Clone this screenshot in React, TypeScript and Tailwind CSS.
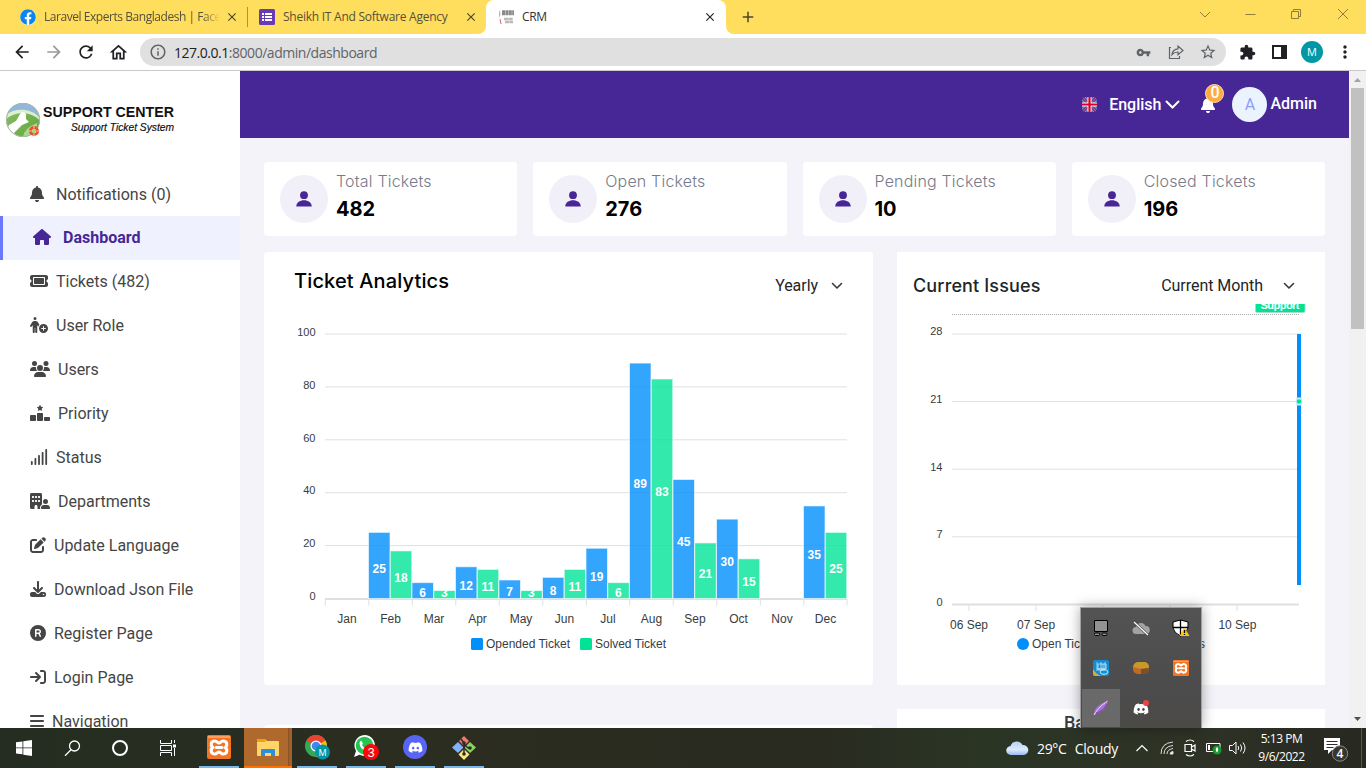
import React from "react";
import {
  FaArrowRightToBracket,
  FaBars,
  FaBell,
  FaBuildingUser,
  FaDownload,
  FaHouse,
  FaPenToSquare,
  FaPersonCirclePlus,
  FaRankingStar,
  FaRegistered,
  FaSignal,
  FaTicket,
  FaUsers,
  FaDiscord,
} from "react-icons/fa6";
import { FaFacebook } from "react-icons/fa";
import {
  MdAdd,
  MdArrowBack,
  MdArrowForward,
  MdClose,
  MdExtension,
  MdInfoOutline,
  MdMoreVert,
  MdOutlineHome,
  MdRefresh,
  MdStarBorder,
  MdVpnKey,
} from "react-icons/md";

const chromeFont = "font-['Open_Sans',sans-serif]";

/* ---------- Browser window ---------- */

function TabStrip() {
  return (
    <div className={`flex h-[34px] shrink-0 bg-white text-[12px] ${chromeFont}`}>
      <div className="flex w-[486px] items-center rounded-br-lg bg-[#ffdd5d] text-[#56513a]">
        <div className="flex w-[247px] items-center pl-5">
          <span className="flex size-4 items-center justify-center rounded-full bg-white">
            <FaFacebook className="size-4 text-[#0b86ee]" />
          </span>
          <span className="ml-2 w-[176px] overflow-hidden whitespace-nowrap tracking-[-0.45px] [mask-image:linear-gradient(90deg,#000_90%,transparent)]">
            Laravel Experts Bangladesh | Facebook
          </span>
          <MdClose className="ml-[5px] size-[14px] text-[#4b4632]" />
        </div>
        <div className="h-5 w-px bg-[#a79348]" />
        <div className="flex w-[238px] items-center pl-[11px]">
          <svg width="16" height="16" viewBox="0 0 16 16">
            <rect width="16" height="16" rx="1.5" fill="#673ab7" />
            <path d="M3 4h2v2H3zM6 4h7v2H6zM3 7h2v2H3zM6 7h7v2H6zM3 10h2v2H3zM6 10h7v2H6z" fill="#fff" />
          </svg>
          <span className="ml-2 w-[182px] whitespace-nowrap tracking-[-0.25px]">Sheikh IT And Software Agency</span>
          <MdClose className="-ml-[1px] size-[14px] text-[#4b4632]" />
        </div>
      </div>
      <div className="w-60 bg-[#ffdd5d]">
        <div className="flex h-full items-center rounded-t-lg bg-white pl-3 text-[#333]">
          <svg width="16" height="16" viewBox="0 0 16 16">
            <path d="M1 1q3 3 0 8z" fill="#9ccf9c" />
            <path d="M2 10l1 5" stroke="#d96b6b" />
            <path d="M4 2.500h12M4 5h12" stroke="#8a8a8a" strokeWidth="2.500" strokeDasharray="3 .4" />
            <path d="M6 10h9M7 13h8" stroke="#bbb" strokeWidth="2.600" strokeDasharray="4 .3" />
          </svg>
          <span className="ml-2 w-[180px] tracking-[-0.4px]">CRM</span>
          <MdClose className="ml-[1px] size-[14px] text-[#222]" />
        </div>
      </div>
      <div className="flex flex-1 items-center rounded-bl-lg bg-[#ffdd5d] pl-[13px]">
        <MdAdd className="size-[18px] text-[#4b4632]" />
        <svg className="mb-[6px] ml-auto mr-[15px]" width="152" height="12" viewBox="0 0 152 12" fill="none" stroke="#8f7d39">
          <path d="M1 4l5 5 5-5M46.500 6.500h10M92.500 3.500h7v7h-7zM94.500 3.500v-2h7v7h-2M139 1l10 10M149 1l-10 10" />
        </svg>
      </div>
    </div>
  );
}

function Toolbar() {
  return (
    <div className={`flex h-[37px] shrink-0 items-center border-b border-[#c9c9c9] bg-white text-[#202124] ${chromeFont}`}>
      <div className="flex items-center gap-3 pl-3">
        <MdArrowBack className="size-5" />
        <MdArrowForward className="size-5 text-[#999]" />
        <MdRefresh className="size-5" />
        <MdOutlineHome className="size-[21px]" />
      </div>
      <div className="ml-[11px] flex h-7 w-[1086px] items-center rounded-full bg-[#e0e0e0] pl-[9px] text-[#5f6368]">
        <MdInfoOutline className="size-[18px]" />
        <span className="ml-[7px] text-[14px] tracking-[-0.47px]">
          <span className="text-[#202124]">127.0.0.1</span>:8000/admin/dashboard
        </span>
        <MdVpnKey className="ml-auto size-[15px]" />
        <svg className="ml-4" width="18" height="18" viewBox="0 0 18 18" fill="none" stroke="#5f6368" strokeWidth="1.200">
          <path d="M4 4.500H2.500v11h10V13" />
          <path d="M5 11.500C5.500 8 7.500 6 11 5.800V3l5 4.500-5 4.300V9C8.500 9 6.500 9.800 5 11.500z" />
        </svg>
        <MdStarBorder className="ml-[14px] mr-[9px] size-[18px]" />
      </div>
      <MdExtension className="ml-[13px] size-[17px]" />
      <svg className="ml-4" width="15" height="14" viewBox="0 0 15 14">
        <path d="M0 0h15v14H0zM2 2v10h7V2z" fill="#202124" fillRule="evenodd" />
      </svg>
      <div className="ml-[14px] flex size-[22px] items-center justify-center rounded-full bg-[#0097a7] text-[11px] text-white">M</div>
      <MdMoreVert className="ml-3 size-5" />
    </div>
  );
}

/* ---------- Sidebar ---------- */

const navItems = [
  { label: "Notifications (0)", Icon: FaBell, icon: "w-[14px] mr-3" },
  { label: "Dashboard", Icon: FaHouse, icon: "w-[18px] mr-3", active: true },
  { label: "Tickets (482)", Icon: FaTicket, icon: "w-[18px] mr-2" },
  { label: "User Role", Icon: FaPersonCirclePlus, icon: "w-[18px] mr-2" },
  { label: "Users", Icon: FaUsers, icon: "w-5 mr-2" },
  { label: "Priority", Icon: FaRankingStar, icon: "w-5 mr-2" },
  { label: "Status", Icon: FaSignal, icon: "w-[18px] mr-2" },
  { label: "Departments", Icon: FaBuildingUser, icon: "w-5 mr-2" },
  { label: "Update Language", Icon: FaPenToSquare, icon: "w-4 mr-2" },
  { label: "Download Json File", Icon: FaDownload, icon: "w-4 mr-2" },
  { label: "Register Page", Icon: FaRegistered, icon: "w-4 mr-2" },
  { label: "Login Page", Icon: FaArrowRightToBracket, icon: "w-4 mr-2" },
  { label: "Navigation", Icon: FaBars, icon: "w-[14px] mr-2" },
];

function Logo() {
  return (
    <svg width="180" height="42" viewBox="0 0 180 42" className="shrink-0">
      <defs>
        <clipPath id="globe">
          <circle cx="23" cy="21" r="17" />
        </clipPath>
        <linearGradient id="field" x1="0" y1="0" x2="1" y2="1">
          <stop offset="0" stopColor="#8fc76a" />
          <stop offset="1" stopColor="#5f9f3a" />
        </linearGradient>
      </defs>
      <g clipPath="url(#globe)">
        <rect width="42" height="42" fill="url(#field)" />
        <path d="M4 2h38v20C36 10 14 6 4 20z" fill="#93b6de" />
        <path d="M4 18C12 8 32 8 41 20l-1 2C32 12 14 12 5 21z" fill="#dcefd0" />
        <path d="M20 15q3-4 6 0v5l3 3-7 3-8 8 5 6h-9l-4-8 3-6 7-4z" fill="#fff" />
        <path d="M23 38q1-9 14-14v14z" fill="#a9d888" />
      </g>
      <circle cx="23" cy="21" r="16.500" fill="none" stroke="#a9b8ad" />
      <circle cx="34" cy="32" r="3.700" fill="none" stroke="#e9532b" strokeWidth="2.800" />
      <path d="M34 26.500v3M34 34.500v3M28.500 32h3M36.500 32h3" stroke="#ffc9a8" />
      <g fontFamily="Liberation Sans, sans-serif">
        <text x="43" y="18" fontSize="15.500" fontWeight="700" fill="#111" textLength="131" lengthAdjust="spacingAndGlyphs">
          SUPPORT CENTER
        </text>
        <text x="71" y="32" fontSize="11.500" fontStyle="italic" fill="#111" stroke="#111" strokeWidth=".2" textLength="103" lengthAdjust="spacingAndGlyphs">
          Support Ticket System
        </text>
      </g>
    </svg>
  );
}

function Sidebar() {
  return (
    <aside className="flex w-60 shrink-0 flex-col overflow-hidden bg-white pt-7">
      <Logo />
      <nav className="mt-[31px] text-[16px] text-[#454545]">
        {navItems.map(({ label, Icon, icon, active }) => (
          <div
            key={label}
            className={
              active
                ? "flex h-11 items-center border-l-[3px] border-[#6b78fb] bg-[#eff1ff] pl-[30px] font-bold text-[#472795]"
                : "flex h-11 items-center pl-[30px] first:pt-px"
            }
          >
            <Icon className={`mb-[2px] h-4 shrink-0 ${icon}`} preserveAspectRatio="none" />
            <span className="whitespace-nowrap">{label}</span>
          </div>
        ))}
      </nav>
    </aside>
  );
}

/* ---------- Page header ---------- */

function Header() {
  return (
    <header className="flex h-[67px] shrink-0 items-center justify-end bg-[#472795] pr-8 text-[16px] font-medium text-white">
      <svg width="15" height="15" viewBox="0 0 15 15">
        <path d="M0 3l12 12M3 0l12 12M15 3L3 15M12 0L0 12" stroke="#6f8fd9" strokeWidth="1.400" />
        <path d="M1 1l13 13M14 1L1 14" stroke="#e14c5c" strokeWidth="1.200" />
        <path d="M7.500 0v15M0 7.500h15" stroke="#fff" strokeWidth="4" />
        <path d="M7.500 0v15M0 7.500h15" stroke="#d80027" strokeWidth="2.200" />
      </svg>
      <span className="ml-3 ">English</span>
      <svg className="ml-1" width="15" height="10" viewBox="0 0 15 10" fill="none" stroke="#fff" strokeWidth="2" strokeLinecap="round">
        <path d="M1.500 1.500l6 6 6-6" />
      </svg>
      <div className="relative ml-[21px]">
        <FaBell className="h-4 w-[14px]" preserveAspectRatio="none" />
        <span className="absolute -top-[13px] left-1 flex size-[19px] items-center justify-center rounded-full border border-[#ffe0b0] bg-[#ffab40] text-[16px] leading-none">
          0
        </span>
      </div>
      <div className="ml-[17px] flex size-[35px] items-center justify-center rounded-full bg-[#ebf3ff] font-normal text-[#8c9eff]">A</div>
      <span className="mb-[2px] ml-[3px]">Admin</span>
    </header>
  );
}

/* ---------- Dashboard ---------- */

const stats = [
  ["Total Tickets", "482"],
  ["Open Tickets", "276"],
  ["Pending Tickets", "10"],
  ["Closed Tickets", "196"],
];

const months: [string, number, number][] = [
  ["Jan", 0, 0],
  ["Feb", 25, 18],
  ["Mar", 6, 3],
  ["Apr", 12, 11],
  ["May", 7, 3],
  ["Jun", 8, 11],
  ["Jul", 19, 6],
  ["Aug", 89, 83],
  ["Sep", 45, 21],
  ["Oct", 30, 15],
  ["Nov", 0, 0],
  ["Dec", 35, 25],
];

function Bar({ x, value, fill }: { x: number; value: number; fill: string }) {
  if (!value) return null;
  const h = value * 2.645;
  const labelY = Math.min(598.5 - h / 2 + 7.2, 597);
  const clipped = value < 4;
  return (
    <g>
      <rect x={x} y={598.5 - h} width="21.500" height={h} fill={fill} fillOpacity=".8" stroke="#fff" strokeOpacity=".6" />
      <svg x={x - 1} y={clipped ? 590.5 : 300} width="22" height={clipped ? 8 : 300} viewBox={`${x} ${clipped ? 590.5 : 300} 22 ${clipped ? 8 : 300}`}>
        <text x={x + 11.7} y={labelY} textAnchor="middle" fill="#fff" fontSize="12" fontWeight="700">
          {value}
        </text>
      </svg>
    </g>
  );
}

function TicketChart() {
  return (
    <svg width="609" height="379" viewBox="264 306 609 379" fontFamily="Liberation Sans, sans-serif" fill="#373d3f" className="block">
      {[100, 80, 60, 40, 20, 0].map((v, i) => (
        <g key={v}>
          <text x="315.500" y={336 + i * 52.8} fontSize="11" textAnchor="end">
            {v}
          </text>
          {v > 0 && <path d={`M325 ${334 + i * 52.9}H847`} stroke="#e0e0e0" />}
        </g>
      ))}
      <path d="M325 599H847" stroke="#e0e0e0" strokeWidth="2" />
      {months.map(([m, a, b], i) => {
        const x = 325 + i * 43.5;
        return (
          <g key={m}>
            <Bar x={x} value={a} fill="#008ffb" />
            <Bar x={x + 21.75} value={b} fill="#00e396" />
            <path d={`M${x + 0.3} 599v6.500`} stroke="#e0e0e0" />
            <text x={x + 22} y="623" fontSize="12" textAnchor="middle">
              {m}
            </text>
          </g>
        );
      })}
      <path d="M847 599v6.500" stroke="#e0e0e0" />
      <rect x="471" y="638" width="12" height="12" rx="1.500" fill="#008ffb" />
      <text x="486" y="648" fontSize="12" textLength="84">Opended Ticket</text>
      <rect x="580" y="638" width="12" height="12" rx="1.500" fill="#00e396" />
      <text x="595" y="648" fontSize="12" textLength="71">Solved Ticket</text>
    </svg>
  );
}

function IssuesChart() {
  return (
    <svg width="428" height="381" viewBox="897 304 428 381" fontFamily="Liberation Sans, sans-serif" fill="#373d3f" className="block overflow-hidden">
      <path d="M952 314.500H1299" stroke="#aaa" strokeDasharray="1 1" />
      <rect x="1255.500" y="293" width="49.500" height="19.500" rx="1.500" fill="#00e396" stroke="#b0d8c8" strokeWidth=".8" />
      <text x="1280" y="309" fontSize="11" fontWeight="700" fill="#fff" textAnchor="middle" textLength="39">
        Support
      </text>
      {[28, 21, 14, 7, 0].map((v, i) => (
        <g key={v}>
          <text x="942.500" y={335 + i * 67.8} fontSize="11" textAnchor="end">
            {v}
          </text>
          <path d={`M952 ${334 + i * 67.6}H1299`} stroke="#e0e0e0" strokeWidth={v ? 1 : 2} />
        </g>
      ))}
      {["06 Sep", "07 Sep", "08 Sep", "09 Sep", "10 Sep"].map((d, i) => (
        <g key={d}>
          <path d={`M${969 + i * 67} 605v6`} stroke="#e0e0e0" />
          <text x={969 + i * 67.1} y="629" fontSize="12" textAnchor="middle">
            {d}
          </text>
        </g>
      ))}
      <rect x="1297" y="334" width="4" height="251" fill="#008ffb" />
      <rect x="1296" y="397.500" width="6" height="8" fill="#c9ecff" />
      <circle cx="1299" cy="401.500" r="2.300" fill="#00e396" />
      <circle cx="1023" cy="644" r="6" fill="#008ffb" />
      <text x="1032" y="648" fontSize="12">Open Tickets</text>
      <circle cx="1119" cy="644" r="6" fill="#00e396" />
      <text x="1205" y="648" fontSize="12" textAnchor="end">Closed Tickets</text>
    </svg>
  );
}

function Chevron() {
  return (
    <svg width="12" height="8" viewBox="0 0 12 8" fill="none" stroke="#343a40" strokeWidth="1.600" strokeLinecap="round" strokeLinejoin="round">
      <path d="M1.500 1.500L6 6l4.500-4.500" />
    </svg>
  );
}

function Dashboard() {
  return (
    <main className="flex min-h-0 flex-1 flex-col overflow-hidden bg-[#f5f3fa] p-6 pb-0">
      <div className="grid shrink-0 grid-cols-4 gap-4">
        {stats.map(([label, value]) => (
          <div key={label} className="flex h-[74px] rounded bg-white pl-4 pt-[13px] font-['Inter',sans-serif]">
            <div className="flex size-12 items-center justify-center rounded-full bg-[#f1eff8]">
              <svg width="16" height="16" viewBox="0 0 16 16" fill="#472795">
                <circle cx="8" cy="4.200" r="3.900" />
                <path d="M.3 15.500C.3 11.500 4 9.300 8 9.300s7.700 2.200 7.700 6.200z" />
              </svg>
            </div>
            <div className="-mt-[6px] ml-2">
              <div className="text-[16px] font-light leading-6 tracking-[0.18px] text-[#767b8a]">{label}</div>
              <div className="mt-px text-[20px] font-bold leading-[30px] text-black">{value}</div>
            </div>
          </div>
        ))}
      </div>
      <div className="mt-4 flex shrink-0 gap-6">
        <section className="h-[433px] w-[609px] rounded bg-white">
          <div className="flex h-[54px] justify-between pl-[30px] pr-[30px]">
            <h2 className="pt-[14px] font-['Inter',sans-serif] text-[20px] font-medium leading-[30px] tracking-[0.14px] text-black">Ticket Analytics</h2>
            <div className="flex items-center gap-[13px] pt-[14px] text-[16px] tracking-[-0.05px] text-[#212529]">
              Yearly
              <Chevron />
            </div>
          </div>
          <TicketChart />
        </section>
        <section className="h-[433px] w-[428px] bg-white">
          <div className="flex h-[52px] items-center justify-between pl-4 pr-[30px] pt-4">
            <h2 className="mb-[2px] font-['Inter',sans-serif] text-[18px] font-medium tracking-[0.14px] text-[#212529]">Current Issues</h2>
            <div className="flex items-center gap-5 text-[16px] tracking-[-0.05px] text-[#212529]">
              Current Month
              <Chevron />
            </div>
          </div>
          <IssuesChart />
        </section>
      </div>
      <div className="mt-6 flex shrink-0 gap-6">
        <section className="mt-4 h-20 w-[609px] rounded bg-white" />
        <section className="h-20 w-[428px] bg-white pl-[167px] text-[18px] font-medium leading-[27px] text-[#373d3f]">
          <h2>Bar Chart</h2>
        </section>
      </div>
    </main>
  );
}

function Scrollbar() {
  return (
    <div className="flex w-[17px] shrink-0 flex-col items-center bg-[#f1f1f1]">
      <svg width="17" height="17" viewBox="0 0 17 17">
        <path d="M5 11l3.500-4 3.500 4z" fill="#a3a3a3" />
      </svg>
      <div className="h-[241px] w-[13px] bg-[#c1c1c1]" />
      <svg className="mt-auto" width="17" height="17" viewBox="0 0 17 17">
        <path d="M5 6l3.500 4L12 6z" fill="#505050" />
      </svg>
    </div>
  );
}

/* ---------- Taskbar ---------- */

function Xampp({ size }: { size: number }) {
  return (
    <svg width={size} height={size} viewBox="0 0 24 24">
      <rect width="24" height="24" rx="2" fill="#f37423" />
      <path d="M1 2h22" stroke="#ffae78" strokeWidth="1.500" />
      <path
        d="M8 6C10 6 10.500 8 12 8S14 6 16 6c4.500 0 4.500 4.500 2.500 6.500C20.500 14.500 20.500 19 16 19c-2 0-2.500-2-4-2s-2 2-4 2c-4.500 0-4.500-4.500-2.500-6.500C3.500 10.500 3.500 6 8 6z"
        fill="none"
        stroke="#fff"
        strokeWidth="3.200"
      />
      <path d="M9 12.500h6" stroke="#fff" strokeWidth="3" strokeLinecap="round" />
    </svg>
  );
}

function Tray() {
  const cell = "flex size-10 items-center justify-center";
  return (
    <div className="absolute left-[1080px] top-[607px] grid h-[121px] w-[122px] grid-cols-3 grid-rows-[40px_40px_40px] border border-b-0 border-[#a0a0a0] bg-[linear-gradient(#535353,#4b4b4b_75%,#4b4a46)] shadow-[0_0_12px_rgba(0,0,0,0.35)]">
      <div className={cell}>
        <svg width="16" height="16" viewBox="0 0 16 16" fill="#929292" stroke="#000">
          <path d="M1.500.5h13v11h-13z" />
          <rect x="1.500" y="13" width="5" height="2.500" rx="1" />
          <rect x="9" y="13" width="5" height="2.500" rx="1" />
        </svg>
      </div>
      <div className={cell}>
        <svg width="18" height="16" viewBox="0 0 18 16">
          <path d="M4 14a3.500 3.500 0 010-7 5 5 0 019.500-1 4 4 0 01.5 8z" fill="#a3a3a3" />
          <path d="M2 2l14 13" stroke="#505050" strokeWidth="2.400" />
          <path d="M2 2l14 13" stroke="#fff" strokeWidth="1.200" />
        </svg>
      </div>
      <div className={cell}>
        <svg width="18" height="18" viewBox="0 0 18 18">
          <path d="M8.500 1l7.500 2v6q-1 5-7.500 8Q2 14 1 9V3z" fill="#fff" stroke="#000" />
          <path d="M8.500 1v16M1 8.500h15" stroke="#000" strokeWidth="1.300" />
          <path d="M12.500 8.500L17.500 17h-10z" fill="#ffc20e" />
          <path d="M12.500 11v3M12.500 15v1" stroke="#000" strokeWidth="1.300" />
        </svg>
      </div>
      <div className={cell}>
        <svg width="16" height="16" viewBox="0 0 16 16">
          <rect width="16" height="16" rx="2" fill="#138cd0" />
          <path d="M0 9q3 5 8 7H2q-2 0-2-2z" fill="#d3ad36" />
          <path d="M4 2v7h8V2M5 4h8v5H5zM8 2v7M10 4v5M3 10h9" fill="none" stroke="#c5ebff" strokeWidth=".8" />
          <ellipse cx="11" cy="12" rx="4" ry="2.300" fill="none" stroke="#c5ebff" />
        </svg>
      </div>
      <div className={cell}>
        <svg width="16" height="12" viewBox="0 0 16 12">
          <rect width="16" height="12" rx="5" fill="#c5672a" />
          <path d="M0 5Q1 1 5 0h7q4 1 4 6Q8 8 0 5z" fill="#c59a28" />
          <path d="M8 7l8-1q0 5-4 6H8z" fill="#7c5129" />
        </svg>
      </div>
      <div className={cell}>
        <Xampp size={16} />
      </div>
      <div className="ml-px flex size-[38px] items-center justify-center self-center bg-[#696969]">
        <svg width="16" height="16" viewBox="0 0 16 16">
          <path d="M1 15C1 8 6 4 14.500 1 14 8 10 12 1 15z" fill="#a973d5" />
          <path d="M1 15C5 8 9 5 14.500 1" stroke="#ead5ff" fill="none" />
          <path d="M3 13.500C9 11 12 8 14 4" stroke="#7438a2" fill="none" />
        </svg>
      </div>
      <div className={cell}>
        <svg width="18" height="18" viewBox="0 0 18 18">
          <FaDiscord x="1" y="2" width="15" height="15" color="#fff" />
          <circle cx="14" cy="4" r="3" fill="#f23f42" />
        </svg>
      </div>
    </div>
  );
}

function AppSlot({ children }: { children: React.ReactNode }) {
  return (
    <div className="flex h-10 w-10 flex-col items-center border-b-2 border-[#76b9ed]">
      <div className="flex flex-1 items-center">{children}</div>
    </div>
  );
}

function Taskbar() {
  return (
    <footer className="flex h-10 shrink-0 items-center bg-[linear-gradient(90deg,#252d22,#2c2d20_35%,#292b21_60%,#2a3524_72%,#2e3226_88%,#272820)] text-white">
      <div className="flex w-48 items-center">
        <div className="flex w-12 justify-center">
          <svg width="16" height="16" viewBox="0 0 16 16" fill="#fff">
            <path d="M0 2.300l6.500-.9v6H0zM7.300 1.300L16 0v7.400H7.300zM0 8.200h6.500v6.100L0 13.500zM7.300 8.200H16V16l-8.700-1.300z" />
          </svg>
        </div>
        <div className="flex w-12 justify-center">
          <svg width="17" height="17" viewBox="0 0 17 17" fill="none" stroke="#fff" strokeWidth="1.300">
            <circle cx="10.500" cy="6" r="5" />
            <path d="M7 9.700l-6 6" />
          </svg>
        </div>
        <div className="flex w-12 justify-center">
          <div className="size-4 rounded-full border-2 border-white" />
        </div>
        <div className="flex w-12 justify-center">
          <svg width="17" height="16" viewBox="0 0 17 16" fill="none" stroke="#fff">
            <path d="M.5 0v3.500h11V0M.5 16v-3.500h11V16M.5 5.500h11v5H.5zM14.500 0v3M14.500 8v8" />
            <path d="M13 4.500h3v3h-3z" fill="#fff" stroke="none" />
          </svg>
        </div>
      </div>
      <div className="ml-[7px]">
        <AppSlot>
          <Xampp size={24} />
        </AppSlot>
      </div>
      <div className="ml-[5px] flex h-10 w-12 flex-col items-center border-b-2 border-[#ff7200] bg-[linear-gradient(90deg,#b0692c_92%,#7b4a23_93%,#a3602b_95%)]">
        <svg className="mt-[10px]" width="22" height="20" viewBox="0 0 22 20">
          <path d="M0 2q0-1 1-1h7l2 2h11q1 0 1 1v13q0 1-1 1H1q-1 0-1-1z" fill="#ffd567" />
          <path d="M0 2q0-1 1-1h7l1 1.500L8 4H0z" fill="#e8a60e" />
          <path d="M4 18v-6q0-1 1-1h12q1 0 1 1v6h-4v-3H8v3z" fill="#2f8edb" />
        </svg>
      </div>
      <div className="ml-[5px] flex gap-[9px]">
        <AppSlot>
          <svg width="26" height="26" viewBox="0 0 26 26" className="ml-[2px]">
            <circle cx="11" cy="12" r="11" fill="#34a853" />
            <path d="M11 12L1.500 6.500A11 11 0 0120.500 6.500z" fill="#ea4335" />
            <path d="M11 12L20.500 6.500A11 11 0 0111 23z" fill="#fbbc04" />
            <path d="M1.500 6.500L11 12V1" fill="#ea4335" />
            <circle cx="11" cy="12" r="5.500" fill="#fff" />
            <circle cx="11" cy="12" r="4.300" fill="#4285f4" />
            <circle cx="17.500" cy="18" r="7.500" fill="#0097a7" />
            <text x="17.500" y="21.500" fontSize="9" fontFamily="Open Sans, sans-serif" textAnchor="middle" fill="#fff">M</text>
          </svg>
        </AppSlot>
        <AppSlot>
          <svg width="26" height="26" viewBox="0 0 26 26">
            <path d="M11.500 1a10.500 10.500 0 11-5 19.800L1 23l2-6A10.500 10.500 0 0111.500 1z" fill="#fff" />
            <circle cx="11.500" cy="11.500" r="8.800" fill="#24c653" />
            <path d="M8 6.500l2 3-1 1.500q1.500 3 4 3.500l1.500-1.500 3 1.500q-1 3.500-5 2.500Q7 15 6.500 9.500q0-2 1.500-3z" fill="#fff" />
            <circle cx="18" cy="18" r="8" fill="#fb0707" />
            <text x="18" y="22.500" fontSize="13" fontFamily="Liberation Sans, sans-serif" textAnchor="middle" fill="#fff">3</text>
          </svg>
        </AppSlot>
        <AppSlot>
          <span className="flex size-6 items-center justify-center rounded-full bg-[#5865f2]">
            <FaDiscord className="size-[15px]" />
          </span>
        </AppSlot>
        <div className="flex h-10 w-10 flex-col items-center border-b-2 border-[#76b9ed]">
          <svg className="mt-[7px]" width="26" height="26" viewBox="0 0 26 26">
            <path d="M13 1l5 5-5 5-5-5z" fill="#f07878" />
            <path d="M7 7l5.500 5.500L7 18l-6-5.500z" fill="#80b3ff" />
            <path d="M19 7l6 5.500-6 5.500-5.500-5.500z" fill="#8dd35f" />
            <path d="M13 14l5.500 5.500L13 25l-5.500-5.500z" fill="#ffe680" />
            <path d="M10 4l3 4v12M13 8q2 5 6 5" stroke="#2b2b25" strokeWidth="1.500" fill="none" />
            <circle cx="13" cy="8" r="1.800" fill="#2b2b25" />
            <circle cx="19" cy="13" r="1.800" fill="#2b2b25" />
            <circle cx="13" cy="19" r="1.800" fill="#2b2b25" />
          </svg>
        </div>
      </div>
      <div className={`ml-auto flex h-full items-center ${chromeFont}`}>
        <svg width="23" height="16" viewBox="0 0 23 16">
          <defs>
            <linearGradient id="cloud" x1="0" y1="0" x2="0" y2="1">
              <stop offset="0" stopColor="#b5d0fa" />
              <stop offset=".6" stopColor="#dceafe" />
              <stop offset="1" stopColor="#9abaf0" />
            </linearGradient>
          </defs>
          <path d="M5 15a4.500 4.500 0 01-.5-9A6.500 6.500 0 0116.500 5 5 5 0 0118 15z" fill="url(#cloud)" />
        </svg>
        <span className="ml-[8px] w-[99px] whitespace-nowrap text-[14px] tracking-[-0.32px] [word-spacing:5px]">29°C Cloudy</span>
        <svg width="12" height="8" viewBox="0 0 12 8" fill="none" stroke="#fff" strokeWidth="1.200">
          <path d="M.5 7L6 1.500 11.500 7" />
        </svg>
        <svg className="ml-[12px]" width="14" height="14" viewBox="0 0 14 14" fill="none" stroke="#ddd">
          <path d="M1 13Q1 2 13 1M4 13q0-7.500 9-8.500M7 13q0-4.500 6-5.500" />
          <path d="M10 13q0-2 3-2.500V13z" fill="#fff" />
        </svg>
        <svg className="ml-[10px]" width="12" height="18" viewBox="0 0 12 18" fill="none" stroke="#fff" strokeWidth="1.200">
          <path d="M2 2.500q4-3 8 0M2 15.500q4 3 8 0M1 5.500h6.500v7H1zM7.500 8L11 6v6L7.500 10" />
        </svg>
        <svg className="ml-[10px]" width="16" height="14" viewBox="0 0 16 14">
          <path d="M.5 2.500H14v8H.5z" fill="none" stroke="#fff" />
          <path d="M2 4h2v5H2z" fill="#fff" />
          <circle cx="11" cy="9" r="4.500" fill="#159b2c" />
          <path d="M11 6q2.500 2.700 0 5.500-2.500-2.800 0-5.500z" fill="#fff" />
        </svg>
        <svg className="ml-[7px]" width="17" height="14" viewBox="0 0 17 14" fill="none" stroke="#fff">
          <path d="M.5 4.500h3L7 1v12L3.500 9.500h-3zM9 5q1.500 2 0 4M11.500 3.500q2.500 3.500 0 7M14 1.500q4 5.500 0 11" />
        </svg>
        <div className="ml-[12px] w-[47px] whitespace-nowrap text-center text-[12px] leading-[18px] tracking-[-0.45px]">
          5:13 PM
          <br />
          9/6/2022
        </div>
        <svg className="ml-[18px] mr-[12px] mt-1" width="26" height="26" viewBox="0 0 26 26">
          <path d="M1 1h16v12H9l-4 4v-4H1z" fill="#fff" />
          <path d="M3.500 4.500h11M3.500 7.500h11M3.500 10.500h7" stroke="#2c3028" />
          <circle cx="17" cy="16.500" r="7.700" fill="#35372f" stroke="#888" />
          <text x="17" y="20.500" fontSize="12" fontWeight="600" textAnchor="middle" fill="#fff">4</text>
        </svg>
        <div className="mr-1 h-full w-px bg-[#55584f]" />
      </div>
    </footer>
  );
}

export default function App() {
  return (
    <div className="relative flex h-[768px] w-[1366px] flex-col overflow-hidden bg-white font-['Roboto',sans-serif]">
      <TabStrip />
      <Toolbar />
      <div className="flex min-h-0 flex-1">
        <Sidebar />
        <div className="flex min-w-0 flex-1 flex-col">
          <Header />
          <Dashboard />
        </div>
        <Scrollbar />
      </div>
      <Taskbar />
      <Tray />
    </div>
  );
}
